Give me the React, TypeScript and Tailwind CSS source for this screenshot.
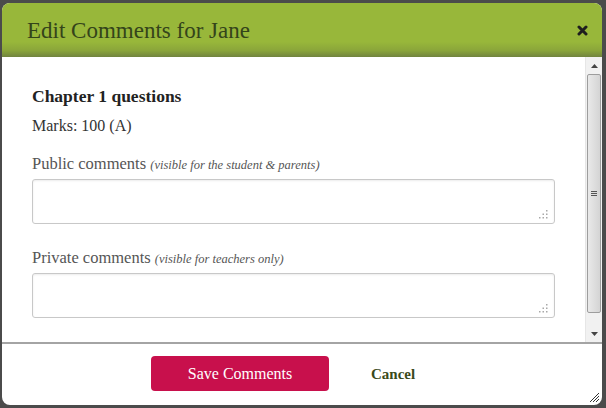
import React from "react";

const serif = "font-['Liberation_Serif','DejaVu_Serif',serif]";

const Grip = () => {
  return (
    <svg width="9" height="9" viewBox="0 0 9 9" className="absolute bottom-[4px] right-[6px]">
      {[
        [7, 0],
        [7, 3.5],
        [3.5, 3.5],
        [7, 7],
        [3.5, 7],
        [0, 7],
      ].map(([x, y], key) => (
        <rect key={key} x={x} y={y} width="1.5" height="1.5" fill="#a8a8a8" />
      ))}
    </svg>
  );
};

const Field = ({ label, hint }: { label: string; hint: string }) => {
  return (
    <div className="flex flex-col">
      <div className="text-[16.5px] leading-[18px] text-[#555]">
        {label} <span className="text-[12.5px] italic">{hint}</span>
      </div>
      <div className="relative mt-[5px] h-[45px] w-[523px] rounded-[3px] border border-[#c8c8c8] bg-white shadow-[inset_0_1px_2px_rgba(0,0,0,0.08)]">
        <Grip />
      </div>
    </div>
  );
};

const Scrollbar = () => {
  return (
    <div className="flex h-full w-[17px] flex-col border-l border-[#e6e6e6] bg-[#f1f1f1]">
      <div className="flex h-[17px] items-center justify-center">
        <svg width="7" height="4" viewBox="0 0 7 4">
          <path d="M0 4 L3.5 0 L7 4 Z" fill="#444" />
        </svg>
      </div>
      <div className="mx-[1px] flex flex-1 items-center justify-center rounded-[2px] border border-[#9d9d9d] bg-[linear-gradient(to_right,#e9e9e9,#d4d4d4)]">
        <div className="flex flex-col gap-[1px]">
          <div className="h-[1px] w-[6px] bg-[#555]" />
          <div className="h-[1px] w-[6px] bg-[#555]" />
          <div className="h-[1px] w-[6px] bg-[#555]" />
        </div>
      </div>
      <div className="h-[12px]" />
      <div className="flex h-[17px] items-center justify-center">
        <svg width="7" height="4" viewBox="0 0 7 4">
          <path d="M0 0 L3.5 4 L7 0 Z" fill="#444" />
        </svg>
      </div>
    </div>
  );
};

export default function App() {
  return (
    <div className={`h-[408px] w-[606px] bg-[#4b4b4b] pl-[2px] pt-[3px] ${serif}`}>
      <div className="flex h-[402px] w-[600px] flex-col overflow-hidden rounded-[8px] bg-white">
        <div className="flex h-[54px] shrink-0 items-center justify-between bg-[linear-gradient(to_bottom,#98b73a_0%,#98b73a_72%,#8aa53a_88%,#71843f_100%)] pl-[25px] pr-[14px]">
          <div className="text-[23px] leading-none text-[#34441a]">Edit Comments for Jane</div>
          <svg width="11" height="11" viewBox="0 0 11 11">
            <path d="M2 2 L9 9 M9 2 L2 9" stroke="#1e1e1e" strokeWidth="3" strokeLinecap="round" />
          </svg>
        </div>

        <div className="flex h-[285px] shrink-0">
          <div className="flex flex-1 flex-col pl-[30px] pt-[29px]">
            <div className="text-[17.5px] font-bold leading-[20px] text-[#222]">Chapter 1 questions</div>
            <div className="mt-[11px] text-[16px] leading-[18px] text-[#333]">Marks: 100 (A)</div>
            <div className="mt-[20px] flex flex-col gap-[25px]">
              <Field label="Public comments" hint="(visible for the student & parents)" />
              <Field label="Private comments" hint="(visible for teachers only)" />
            </div>
          </div>
          <Scrollbar />
        </div>

        <div className="h-[2px] shrink-0 bg-[#a4a4a4]" />

        <div className="relative flex flex-1 items-start pl-[149px] pt-[12px]">
          <button className="h-[35px] w-[178px] rounded-[4px] bg-[#c8104c] text-[16px] text-white">
            Save Comments
          </button>
          <button className="ml-[42px] mt-[7px] text-[15px] font-bold text-[#3a4a1b]">Cancel</button>
          <svg width="11" height="11" viewBox="0 0 11 11" className="absolute bottom-[2px] right-[2px]">
            <path d="M1 10 L10 1 M4 10 L10 4 M7 10 L10 7" stroke="#333" strokeWidth="1" />
          </svg>
        </div>
      </div>
    </div>
  );
}
